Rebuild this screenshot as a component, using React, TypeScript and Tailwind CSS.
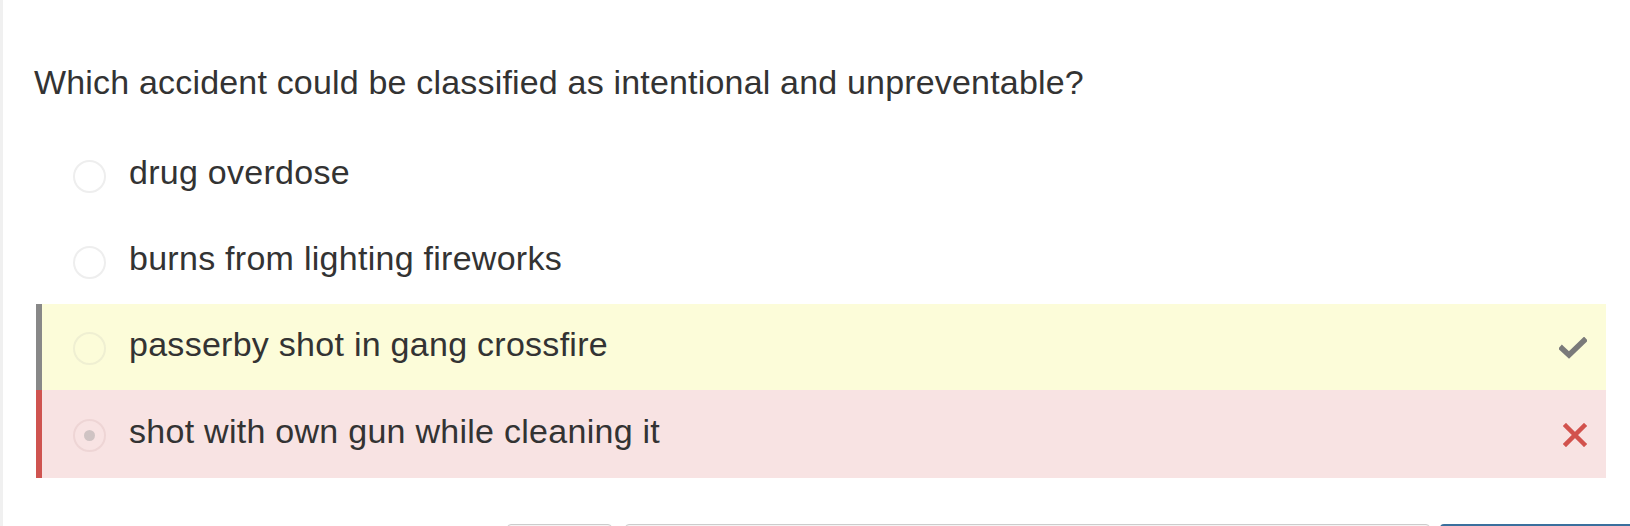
import React from "react";

type Choice = {
  label: string;
  state?: "correct" | "wrong";
  selected?: boolean;
};

const CHOICES: Choice[] = [
  { label: "drug overdose" },
  { label: "burns from lighting fireworks" },
  { label: "passerby shot in gang crossfire", state: "correct" },
  { label: "shot with own gun while cleaning it", state: "wrong", selected: true },
];

function CheckIcon() {
  return (
    <svg width="28" height="22" viewBox="0 0 28 22" fill="none">
      <path d="M3 11.5 L10 18 L25 3.5" stroke="#7a7a7a" strokeWidth="5.5" strokeLinecap="square" strokeLinejoin="miter" />
    </svg>
  );
}

function CrossIcon() {
  return (
    <svg width="24" height="24" viewBox="0 0 24 24" fill="none">
      <path d="M3 3 L21 21 M21 3 L3 21" stroke="#d2524d" strokeWidth="4.5" strokeLinecap="square" />
    </svg>
  );
}

function ChoiceRow({ choice }: { choice: Choice }) {
  const rowBg =
    choice.state === "correct"
      ? "h-[86px] bg-[#fcfcd9] border-l-[6px] border-[#888888]"
      : choice.state === "wrong"
      ? "h-[88px] bg-[#f8e3e3] border-l-[6px] border-[#cf5450]"
      : "h-[86px] border-l-[6px] border-transparent";
  const ring =
    choice.state === "correct"
      ? "border-[#efefd2]"
      : choice.state === "wrong"
      ? "border-[#eed5d5]"
      : "border-[#eeeeee]";
  return (
    <div className={`flex items-center ${rowBg}`}>
      <div className={`ml-[31px] mt-[2px] w-[33px] h-[33px] rounded-full border-2 ${ring} flex items-center justify-center shrink-0`}>
        {choice.selected && <div className="w-[11px] h-[11px] rounded-full bg-[#cfc3c3]" />}
      </div>
      <div className="ml-[23px] pb-[6px] text-[34px] tracking-[0.27px] text-[#333333] leading-none">{choice.label}</div>
      <div className="ml-auto mr-[19px] mt-[2px] flex items-center">
        {choice.state === "correct" && <CheckIcon />}
        {choice.state === "wrong" && <CrossIcon />}
      </div>
    </div>
  );
}

export default function App() {
  return (
    <div
      className="flex min-h-[526px] bg-white"
      style={{ fontFamily: '"Liberation Sans", Arial, sans-serif' }}
    >
      <div className="w-[3px] bg-[#f0f0f0] shrink-0" />
      <div className="flex-1 pl-[31px] pr-[24px]">
        <div className="pt-[65px] pb-[32px] text-[34px] tracking-[0.18px] leading-[35px] text-[#333333]">
          Which accident could be classified as intentional and unpreventable?
        </div>
        <div className="ml-[2px] flex flex-col">
          {CHOICES.map((c) => (
            <ChoiceRow key={c.label} choice={c} />
          ))}
        </div>
        <div className="mt-[46px] flex gap-[13px] ml-[473px] mr-[-24px]">
          <div className="w-[105px] h-[40px] rounded-[4px] border border-[#cccccc] bg-[#f4f4f4]" />
          <div className="flex-1 h-[40px] rounded-[4px] border border-[#cccccc] bg-[#f4f4f4]" />
          <div className="w-[190px] h-[40px] rounded-l-[4px] bg-[#3a6f9d] ml-[-3px]" />
        </div>
      </div>
    </div>
  );
}
